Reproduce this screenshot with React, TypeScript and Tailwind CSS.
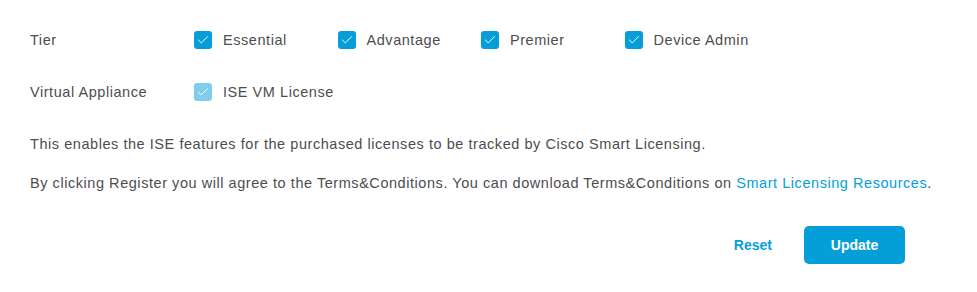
import { Check } from "lucide-react";

const tiers = ["Essential", "Advantage", "Premier", "Device Admin"];

function CheckItem({ label, muted }: { label: string; muted?: boolean }) {
  return (
    <label className="flex w-[143.5px] items-center gap-[11px]">
      <span
        className={
          "flex h-[18px] w-[18px] shrink-0 items-center justify-center rounded-[3px] " +
          (muted ? "bg-[#80cdec]" : "bg-[#049fd9]")
        }
      >
        <Check className="h-[14px] w-[14px] text-white" strokeWidth={1.6} />
      </span>
      <span>{label}</span>
    </label>
  );
}

export default function App() {
  return (
    <div
      className="min-h-screen bg-white px-[30px] pt-[28px] text-[14.5px] leading-[20px] tracking-[0.55px] text-[#4d4d50]"
      style={{ fontFamily: '"Liberation Sans", Arial, sans-serif' }}
    >
      <div className="flex h-[24px] items-center">
        <div className="w-[164px]">Tier</div>
        {tiers.map((t) => (
          <CheckItem key={t} label={t} />
        ))}
      </div>

      <div className="mt-[28px] flex h-[24px] items-center">
        <div className="w-[164px]">Virtual Appliance</div>
        <CheckItem label="ISE VM License" muted />
      </div>

      <p className="mt-[30px]">
        This enables the ISE features for the purchased licenses to be tracked by Cisco Smart Licensing.
      </p>
      <p className="mt-[19px] whitespace-nowrap">
        By clicking Register you will agree to the Terms&amp;Conditions. You can download Terms&amp;Conditions on{" "}
        <a href="#" className="text-[#049fd9]">
          Smart Licensing Resources
        </a>
        .
      </p>

      <div className="mt-[33px] flex items-center justify-end pr-[42px] tracking-normal">
        <button className="mr-[32px] text-[14px] font-semibold text-[#049fd9]">Reset</button>
        <button className="h-[38px] w-[101px] rounded-[5px] bg-[#049fd9] text-[14px] font-semibold text-white">
          Update
        </button>
      </div>
    </div>
  );
}
